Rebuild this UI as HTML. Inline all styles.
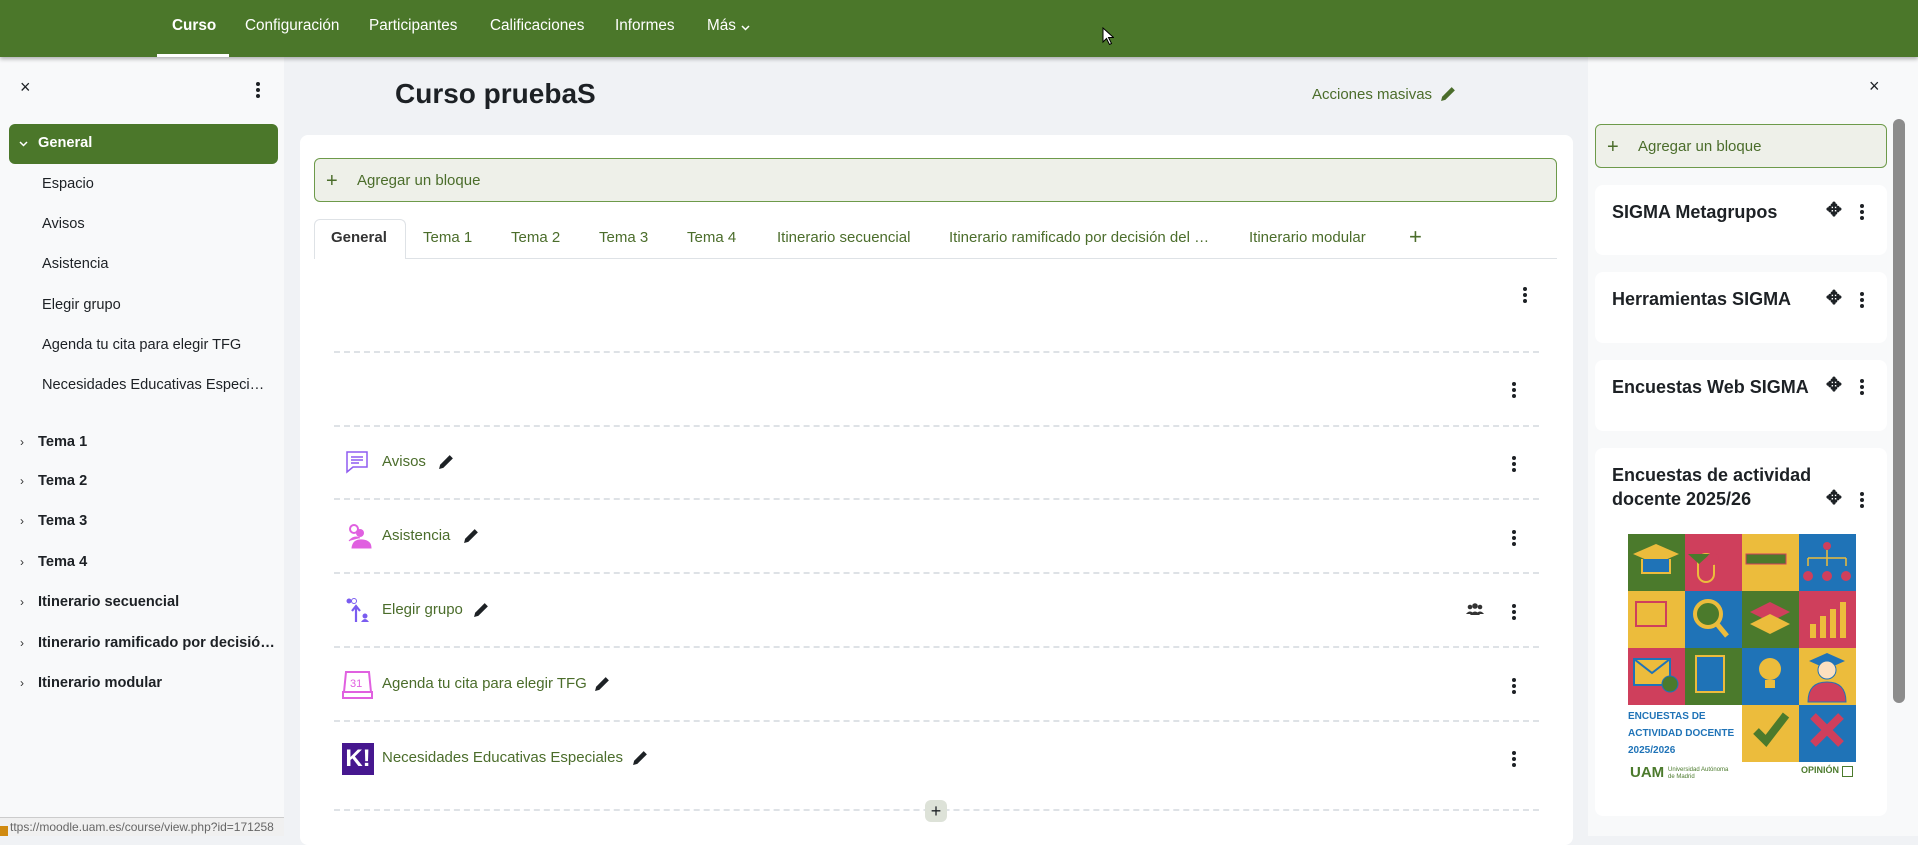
<!DOCTYPE html>
<html><head><meta charset="utf-8"><style>
*{box-sizing:border-box;margin:0;padding:0}
body{width:1918px;height:836px;overflow:hidden;background:#f0f2f5;font-family:"Liberation Sans",Arial,sans-serif;color:#1d2125;position:relative}
.abs{position:absolute}
.nav{left:0;top:0;width:1918px;height:57px;background:#4b772a;box-shadow:0 2px 4px rgba(0,0,0,.3);z-index:5}
.nav span{position:absolute;top:17px;color:#fff;font-size:15.3px}
.left{left:0;top:57px;width:284px;height:779px;background:#f8f9fa}
.left .it{position:absolute;left:42px;font-size:14.6px;color:#1d2125}
.left .sec{position:absolute;left:38px;font-size:14.6px;font-weight:bold;color:#1d2125}
.left .chev{position:absolute;left:20px;font-size:12px;color:#333}
.card{left:300px;top:135px;width:1273px;height:710px;background:#fff;border-radius:8px}
.tab{position:absolute;top:229px;font-size:15px;color:#4b6d2b}
.dash{position:absolute;left:334px;width:1205px;border-top:2px dashed #dee2e6}
.act{position:absolute;left:382px;font-size:15px;color:#4b6d2b}
.keb{position:absolute;width:4px}
.keb i{display:block;width:4px;height:4px;border-radius:2px;background:#1d2125;margin-bottom:2px}
.pen{position:absolute}
.right{left:1588px;top:57px;width:330px;height:779px;background:#f8f9fa}
.blk{position:absolute;left:1595px;width:292px;background:#fff;border-radius:8px}
.blk b{position:absolute;left:17px;font-size:18px;color:#1d2125}
.sq{position:absolute;width:57px;height:57px}
.mv{position:absolute;font-size:19px;font-weight:bold;color:#1d2125}
</style></head><body>
<div class="abs nav">
<span style="left:172px;font-weight:bold">Curso</span>
<div class="abs" style="left:157px;top:54px;width:72px;height:3px;background:#fff"></div>
<span style="left:245px">Configuración</span>
<span style="left:369px">Participantes</span>
<span style="left:490px">Calificaciones</span>
<span style="left:615px">Informes</span>
<span style="left:707px">Más</span>
<svg class="abs" style="left:741px;top:25px" width="9" height="6" viewBox="0 0 9 6"><path d="M1 1l3.5 3.5L8 1" stroke="#fff" stroke-width="1.5" fill="none"/></svg>
<svg class="abs" style="left:1102px;top:27px" width="12" height="18" viewBox="0 0 12 18"><path d="M1 1v14l3.5-3.5 3 6 2-1-3-6h5z" fill="#fff" stroke="#000"/></svg>
</div>

<div class="abs left">
<div class="abs" style="left:20px;top:20px;font-size:18px">×</div>
<div class="keb" style="left:256px;top:25px"><i></i><i></i><i></i></div>
<div class="abs" style="left:9px;top:67px;width:269px;height:40px;background:#4b772a;border-radius:6px"></div>
<svg class="abs" style="left:19px;top:84px" width="9" height="6" viewBox="0 0 9 6"><path d="M1 1l3.5 3.5L8 1" stroke="#fff" stroke-width="1.5" fill="none"/></svg>
<div class="abs" style="left:38px;top:78px;color:#fff;font-size:14.6px;font-weight:bold">General</div>
<div class="it" style="top:119px">Espacio</div>
<div class="it" style="top:159px">Avisos</div>
<div class="it" style="top:199px">Asistencia</div>
<div class="it" style="top:240px">Elegir grupo</div>
<div class="it" style="top:280px">Agenda tu cita para elegir TFG</div>
<div class="it" style="top:320px">Necesidades Educativas Especi…</div>
<div class="chev" style="top:378px">›</div><div class="sec" style="top:377px">Tema 1</div>
<div class="chev" style="top:417px">›</div><div class="sec" style="top:416px">Tema 2</div>
<div class="chev" style="top:457px">›</div><div class="sec" style="top:456px">Tema 3</div>
<div class="chev" style="top:498px">›</div><div class="sec" style="top:497px">Tema 4</div>
<div class="chev" style="top:538px">›</div><div class="sec" style="top:537px">Itinerario secuencial</div>
<div class="chev" style="top:579px">›</div><div class="sec" style="top:578px">Itinerario ramificado por decisió…</div>
<div class="chev" style="top:619px">›</div><div class="sec" style="top:618px">Itinerario modular</div>
</div>

<div class="abs" style="left:395px;top:78px;font-size:28px;font-weight:bold">Curso pruebaS</div>
<div class="abs" style="left:1312px;top:86px;font-size:15px;color:#4b6d2b">Acciones masivas</div>
<svg class="pen" style="left:1440px;top:85px" width="17" height="17" viewBox="0 0 16 16"><path d="M1 15l1-4 9-9 3 3-9 9z" fill="#4b6d2b"/></svg>

<div class="abs card"></div>
<div class="abs" style="left:314px;top:158px;width:1243px;height:44px;background:#eef0e9;border:1px solid #6d9a4a;border-radius:6px"></div>
<div class="abs" style="left:326px;top:170px;font-size:20px;color:#4b6d2b">+</div>
<div class="abs" style="left:357px;top:172px;font-size:15px;color:#4b6d2b">Agregar un bloque</div>

<div class="abs" style="left:314px;top:258px;width:1243px;border-top:1px solid #dee2e6"></div>
<div class="abs" style="left:314px;top:219px;width:92px;height:40px;background:#fff;border:1px solid #dee2e6;border-bottom:none;border-radius:6px 6px 0 0"></div>
<div class="tab" style="left:331px;font-weight:bold;color:#333">General</div>
<div class="tab" style="left:423px">Tema 1</div>
<div class="tab" style="left:511px">Tema 2</div>
<div class="tab" style="left:599px">Tema 3</div>
<div class="tab" style="left:687px">Tema 4</div>
<div class="tab" style="left:777px">Itinerario secuencial</div>
<div class="tab" style="left:949px">Itinerario ramificado por decisión del …</div>
<div class="tab" style="left:1249px">Itinerario modular</div>
<div class="tab" style="left:1409px;font-size:22px;top:224px">+</div>

<div class="keb" style="left:1523px;top:287px"><i></i><i></i><i></i></div>
<div class="dash" style="top:351px"></div>
<div class="keb" style="left:1512px;top:382px"><i></i><i></i><i></i></div>
<div class="dash" style="top:425px"></div>
<div class="dash" style="top:498px"></div>
<div class="dash" style="top:572px"></div>
<div class="dash" style="top:646px"></div>
<div class="dash" style="top:720px"></div>
<div class="dash" style="top:809px"></div>
<div class="abs" style="left:925px;top:800px;width:22px;height:22px;border-radius:6px;background:#dde2d8;text-align:center;font-size:18px;line-height:22px">+</div>

<svg class="abs" style="left:345px;top:450px" width="25" height="25" viewBox="0 0 25 25"><path d="M2 2h20v15H8l-6 5z" fill="none" stroke="#8f5cf0" stroke-width="1.5"/><path d="M6 7h12M6 10h12M6 13h8" stroke="#8f5cf0" stroke-width="1.5"/></svg>
<div class="act" style="top:453px">Avisos</div>
<svg class="pen" style="left:438px;top:453px" width="17" height="17" viewBox="0 0 16 16"><path d="M1 15l1-4 9-9 3 3-9 9z" fill="#1d2125"/></svg>

<svg class="abs" style="left:345px;top:523px" width="27" height="27" viewBox="0 0 27 27"><circle cx="9" cy="6" r="4" fill="none" stroke="#e060e0" stroke-width="2"/><circle cx="15" cy="10" r="4" fill="#e060e0"/><path d="M4 18q5-6 11-3M7 25q1-9 11-8q8 1 8 8z" fill="#e060e0" stroke="#e060e0"/></svg>
<div class="act" style="top:527px">Asistencia</div>
<svg class="pen" style="left:463px;top:527px" width="17" height="17" viewBox="0 0 16 16"><path d="M1 15l1-4 9-9 3 3-9 9z" fill="#1d2125"/></svg>

<svg class="abs" style="left:345px;top:597px" width="27" height="27" viewBox="0 0 27 27"><circle cx="4" cy="4" r="2.5" fill="#7a5cf0"/><circle cx="9" cy="4" r="2.5" fill="none" stroke="#7a5cf0"/><path d="M11 25V10M7 14l4-5 4 5" stroke="#7a5cf0" stroke-width="2.2" fill="none"/><circle cx="20" cy="19" r="2.5" fill="#7a5cf0"/><path d="M16 25q4-6 8 0z" fill="#7a5cf0"/></svg>
<div class="act" style="top:601px">Elegir grupo</div>
<svg class="pen" style="left:473px;top:601px" width="17" height="17" viewBox="0 0 16 16"><path d="M1 15l1-4 9-9 3 3-9 9z" fill="#1d2125"/></svg>

<svg class="abs" style="left:341px;top:670px" width="33" height="30" viewBox="0 0 33 30"><path d="M5 2h23l2 20H3z" fill="none" stroke="#e060e0" stroke-width="2"/><path d="M2 22h29v6H2z" fill="none" stroke="#e060e0" stroke-width="2"/><text x="9" y="17" font-size="11" fill="#e060e0" font-family="Liberation Sans">31</text></svg>
<div class="act" style="top:675px">Agenda tu cita para elegir TFG</div>
<svg class="pen" style="left:594px;top:675px" width="17" height="17" viewBox="0 0 16 16"><path d="M1 15l1-4 9-9 3 3-9 9z" fill="#1d2125"/></svg>

<div class="abs" style="left:342px;top:743px;width:32px;height:32px;background:#46178f;color:#fff;font-weight:bold;font-size:24px;line-height:32px;text-align:center">K!</div>
<div class="act" style="top:749px">Necesidades Educativas Especiales</div>
<svg class="pen" style="left:632px;top:749px" width="17" height="17" viewBox="0 0 16 16"><path d="M1 15l1-4 9-9 3 3-9 9z" fill="#1d2125"/></svg>

<div class="keb" style="left:1512px;top:456px"><i></i><i></i><i></i></div>
<div class="keb" style="left:1512px;top:530px"><i></i><i></i><i></i></div>
<div class="keb" style="left:1512px;top:604px"><i></i><i></i><i></i></div>
<div class="keb" style="left:1512px;top:678px"><i></i><i></i><i></i></div>
<div class="keb" style="left:1512px;top:751px"><i></i><i></i><i></i></div>
<svg class="abs" style="left:1466px;top:603px" width="18" height="13" viewBox="0 0 18 13"><circle cx="4" cy="4" r="2.3" fill="#333"/><circle cx="9" cy="3" r="2.8" fill="#333"/><circle cx="14" cy="4" r="2.3" fill="#333"/><path d="M0 11q4-5 8 0zM4 12q5-7 10 0zM10 11q4-5 8 0z" fill="#333"/></svg>

<div class="abs right"></div>
<div class="abs" style="left:1869px;top:76px;font-size:18px">×</div>
<div class="abs" style="left:1595px;top:124px;width:292px;height:44px;background:#eef0e9;border:1px solid #6d9a4a;border-radius:6px"></div>
<div class="abs" style="left:1607px;top:136px;font-size:20px;color:#4b6d2b">+</div>
<div class="abs" style="left:1638px;top:138px;font-size:15px;color:#4b6d2b">Agregar un bloque</div>

<div class="blk" style="top:185px;height:70px"><b style="top:17px">SIGMA Metagrupos</b></div>
<div class="blk" style="top:272px;height:71px"><b style="top:17px">Herramientas SIGMA</b></div>
<div class="blk" style="top:360px;height:71px"><b style="top:17px">Encuestas Web SIGMA</b></div>
<div class="blk" style="top:448px;height:368px"><b style="top:15px;line-height:24px">Encuestas de actividad<br>docente 2025/26</b></div>
<div class="mv" style="left:1826px;top:199px">✥</div><div class="keb" style="left:1860px;top:204px"><i></i><i></i><i></i></div>
<div class="mv" style="left:1826px;top:287px">✥</div><div class="keb" style="left:1860px;top:292px"><i></i><i></i><i></i></div>
<div class="mv" style="left:1826px;top:374px">✥</div><div class="keb" style="left:1860px;top:379px"><i></i><i></i><i></i></div>
<div class="mv" style="left:1826px;top:487px">✥</div><div class="keb" style="left:1860px;top:492px"><i></i><i></i><i></i></div>

<div class="sq" style="left:1628px;top:534px;background:#4b7a2c"></div>
<div class="sq" style="left:1685px;top:534px;background:#cf3f5c"></div>
<div class="sq" style="left:1742px;top:534px;background:#ecbc3c"></div>
<div class="sq" style="left:1799px;top:534px;background:#1f73b7"></div>
<div class="sq" style="left:1628px;top:591px;background:#ecbc3c"></div>
<div class="sq" style="left:1685px;top:591px;background:#1f73b7"></div>
<div class="sq" style="left:1742px;top:591px;background:#4b7a2c"></div>
<div class="sq" style="left:1799px;top:591px;background:#cf3f5c"></div>
<div class="sq" style="left:1628px;top:648px;background:#cf3f5c"></div>
<div class="sq" style="left:1685px;top:648px;background:#4b7a2c"></div>
<div class="sq" style="left:1742px;top:648px;background:#1f73b7"></div>
<div class="sq" style="left:1799px;top:648px;background:#ecbc3c"></div>
<div class="sq" style="left:1742px;top:705px;background:#ecbc3c"></div>
<div class="sq" style="left:1799px;top:705px;background:#1f73b7"></div>
<svg class="abs" style="left:1628px;top:534px" width="228" height="228" viewBox="0 0 228 228">
<path d="M5 20l23-10 23 10-23 10z" fill="#ecbc3c"/><path d="M14 25v14h28V25" fill="#1f73b7" stroke="#ecbc3c" stroke-width="2"/>
<rect x="70" y="20" width="16" height="28" rx="8" fill="none" stroke="#ecbc3c" stroke-width="2"/>
<path d="M60 20h22l-11 10z" fill="#4b7a2c"/><circle cx="85" cy="25" r="6" fill="#cf3f5c"/>
<path d="M118 20h40v10h-40z" fill="#4b7a2c" stroke="#cf3f5c"/>
<circle cx="199" cy="12" r="4" fill="#cf3f5c"/><path d="M199 16v8M180 24h38M180 24v8M199 24v8M218 24v8" stroke="#ecbc3c" stroke-width="1.5"/>
<circle cx="180" cy="42" r="5" fill="#cf3f5c"/><circle cx="199" cy="42" r="5" fill="#cf3f5c"/><circle cx="218" cy="42" r="5" fill="#cf3f5c"/>
<rect x="8" y="68" width="30" height="24" fill="#ecbc3c" stroke="#cf3f5c" stroke-width="2"/>
<circle cx="80" cy="80" r="13" fill="#4b7a2c" stroke="#ecbc3c" stroke-width="4"/><path d="M89 90l10 12" stroke="#ecbc3c" stroke-width="5"/>
<path d="M142 68l20 10-20 10-20-10z" fill="#cf3f5c"/><path d="M142 80l20 10-20 10-20-10z" fill="#ecbc3c"/>
<rect x="182" y="90" width="6" height="14" fill="#ecbc3c"/><rect x="192" y="82" width="6" height="22" fill="#ecbc3c"/><rect x="202" y="75" width="6" height="29" fill="#ecbc3c"/><rect x="212" y="68" width="6" height="36" fill="#ecbc3c"/>
<rect x="6" y="125" width="36" height="26" fill="#ecbc3c" stroke="#1f73b7" stroke-width="2"/><path d="M6 125l18 14 18-14" stroke="#1f73b7" fill="none" stroke-width="2"/>
<circle cx="42" cy="150" r="8" fill="#4b7a2c" stroke="#1f73b7"/>
<rect x="68" y="122" width="28" height="36" fill="#1f73b7" stroke="#ecbc3c" stroke-width="2"/>
<circle cx="142" cy="135" r="11" fill="#ecbc3c"/><rect x="137" y="146" width="10" height="8" fill="#ecbc3c"/>
<path d="M181 127l18-8 18 8-18 8z" fill="#1f73b7"/><circle cx="199" cy="136" r="9" fill="#fce0c0" stroke="#1f73b7"/><path d="M180 168q0-20 19-20q19 0 19 20z" fill="#cf3f5c" stroke="#1f73b7"/>
<path d="M128 197l10 10 20-26" stroke="#4b7a2c" stroke-width="8" fill="none"/>
<path d="M185 182l28 28M213 182l-28 28" stroke="#cf3f5c" stroke-width="8"/>
</svg>
<div class="abs" style="left:1628px;top:708px;font-size:10px;font-weight:bold;color:#1f73b7;line-height:17px">ENCUESTAS DE<br>ACTIVIDAD DOCENTE<br>2025/2026</div>
<div class="abs" style="left:1630px;top:764px;font-size:15px;font-weight:bold;color:#4b7a2c">UAM</div>
<div class="abs" style="left:1668px;top:767px;font-size:6px;color:#4b7a2c;line-height:7px">Universidad Autónoma<br>de Madrid</div>
<div class="abs" style="left:1801px;top:765px;font-size:9px;font-weight:bold;color:#4b7a2c">OPINIÓN</div>
<div class="abs" style="left:1842px;top:766px;width:11px;height:11px;border:1.5px solid #4b7a2c"></div>

<div class="abs" style="left:1893px;top:119px;width:12px;height:584px;background:#8c8c8c;border-radius:6px"></div>

<div class="abs" style="left:0;top:817px;width:284px;height:19px;background:#f0f0f0;border-top:1px solid #ccc;font-size:12px;color:#666;padding:2px 0 0 10px">ttps://moodle.uam.es/course/view.php?id=171258</div>
<div class="abs" style="left:0;top:826px;width:8px;height:10px;background:#d08a10"></div>
</body></html>
